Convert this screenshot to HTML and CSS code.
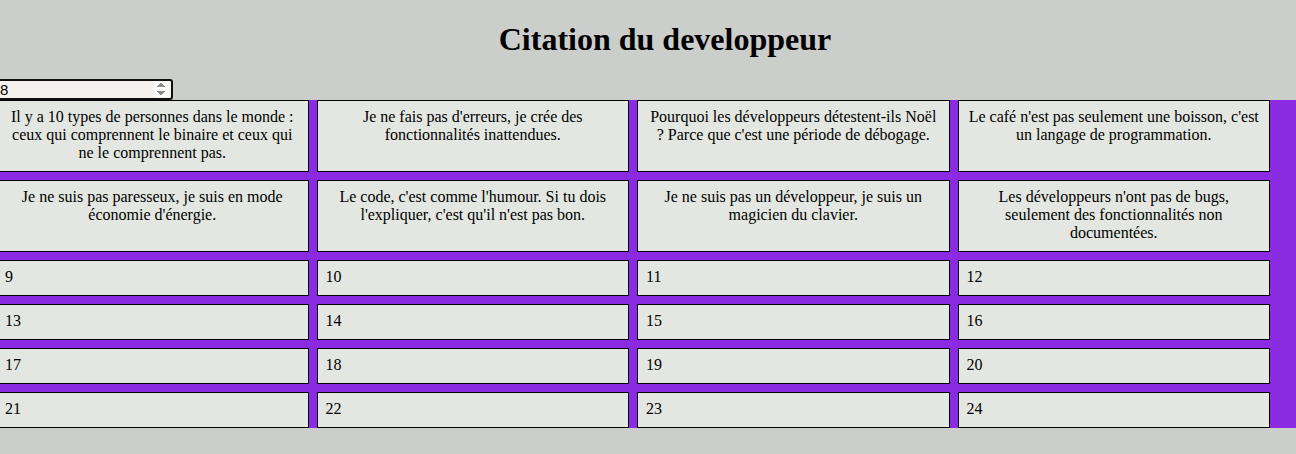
FILE: index.html
```html
<!DOCTYPE html>
<html lang="fr">
<head>
    <meta charset="UTF-8">
    <meta name="viewport" content="width=device-width, initial-scale=1.0">
    <title>Citation du developpeur</title>
    <link rel="stylesheet" href="styles.css">
</head>
<body>
    <div class="page">
        <h1>Citation du developpeur</h1>
        <input type="number" id="count" class="count-input" value="8" min="0" max="24" autofocus>

        <div class="quote-grid" id="grid">
            <div class="cell quote">Il y a 10 types de personnes dans le monde : ceux qui comprennent le binaire et ceux qui ne le comprennent pas.</div>
            <div class="cell quote">Je ne fais pas d'erreurs, je crée des fonctionnalités inattendues.</div>
            <div class="cell quote">Pourquoi les développeurs détestent-ils Noël ? Parce que c'est une période de débogage.</div>
            <div class="cell quote">Le café n'est pas seulement une boisson, c'est un langage de programmation.</div>
            <div class="cell quote">Je ne suis pas paresseux, je suis en mode économie d'énergie.</div>
            <div class="cell quote">Le code, c'est comme l'humour. Si tu dois l'expliquer, c'est qu'il n'est pas bon.</div>
            <div class="cell quote">Je ne suis pas un développeur, je suis un magicien du clavier.</div>
            <div class="cell quote">Les développeurs n'ont pas de bugs, seulement des fonctionnalités non documentées.</div>
            <div class="cell">9</div>
            <div class="cell">10</div>
            <div class="cell">11</div>
            <div class="cell">12</div>
            <div class="cell">13</div>
            <div class="cell">14</div>
            <div class="cell">15</div>
            <div class="cell">16</div>
            <div class="cell">17</div>
            <div class="cell">18</div>
            <div class="cell">19</div>
            <div class="cell">20</div>
            <div class="cell">21</div>
            <div class="cell">22</div>
            <div class="cell">23</div>
            <div class="cell">24</div>
        </div>
    </div>
</body>
</html>
```

FILE: styles.css
```css
html {
    overflow: hidden; /* the page is a little wider than the window */
}
body {
    margin: 0;
    background-color: #cccecb;
    font-family: 'Liberation Serif', 'Times New Roman', serif;
    color: #000;
}
.page {
    width: 1338px;
    margin-left: -4px;
}
h1 {
    text-align: center;
    font-size: 32px;
    margin: 21.44px 0 21px;
}
.count-input {
    display: block;
    box-sizing: border-box;
    width: 177px;
    height: 21px;
    margin: 0;
    padding: 0 2px;
    font-family: 'Liberation Sans', Arial, sans-serif;
    font-size: 15px;
    background-color: #f5f2ee;
    border: 2px solid #111;
    border-radius: 3px;
    outline: none;
}
.quote-grid {
    display: grid;
    grid-template-columns: repeat(4, 312.5px);
    gap: 8px;
    background-color: #8a2be2;
}
.cell {
    background-color: #e4e7e1;
    border: 1px solid #000;
    padding: 7px 8px 9px;
    font-size: 16px;
    line-height: 18px;
}
.cell.quote {
    text-align: center;
}
```
